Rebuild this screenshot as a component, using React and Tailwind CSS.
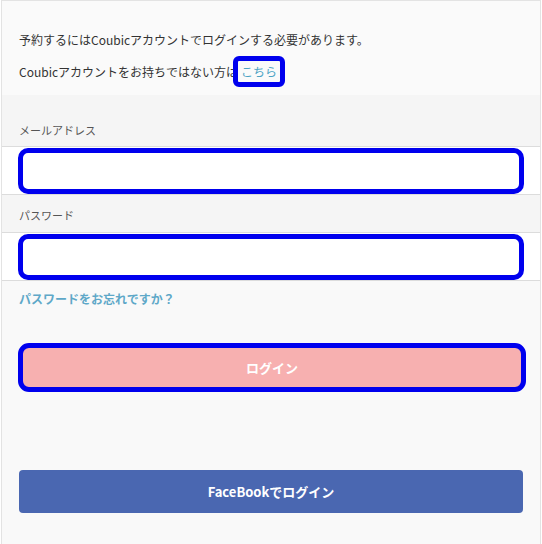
export default function App() {
  const font = { fontFamily: '"Noto Sans CJK JP", "Noto Sans", sans-serif' };
  return (
    <div
      className="h-[544px] w-[542px] bg-white text-[#333]"
      style={font}
    >
      <div className="mx-[1px] flex h-[544px] flex-col border-x border-t border-[#e3e3e3] bg-[#f9f9f9]">
        <div className="flex h-[94px] flex-col bg-[#fafafa] px-[17px] pt-[29px] text-[12px] leading-[20px] text-[#333]">
          <p>予約するにはCoubicアカウントでログインする必要があります。</p>
          <p className="mt-[6px] flex items-center">
            Coubicアカウントをお持ちではない方は
            <a className="-ml-[5px] flex h-[31px] items-center rounded-[6px] border-[5px] border-[#0000ee] px-[3px] text-[#4aa3c4]">
              こちら
            </a>
          </p>
        </div>

        <div className="flex h-[51px] items-end bg-[#f5f5f5] px-[17px] pb-[8px] text-[11px] text-[#555]">
          メールアドレス
        </div>
        <div className="flex h-[49px] items-center border-y border-[#dcdcdc] bg-white px-[16px]">
          <div className="h-[46px] w-[506px] rounded-[10px] border-[5px] border-[#0000ee] bg-white" />
        </div>

        <div className="flex h-[37px] items-center bg-[#f5f5f5] px-[17px] pt-[4px] text-[11px] text-[#555]">
          パスワード
        </div>
        <div className="flex h-[49px] items-center border-y border-[#dcdcdc] bg-white px-[16px]">
          <div className="h-[46px] w-[506px] rounded-[10px] border-[5px] border-[#0000ee] bg-white" />
        </div>

        <div className="px-[17px] pt-[4px]">
          <a className="text-[12px] font-bold text-[#5ea8c8]">パスワードをお忘れですか？</a>
        </div>

        <div className="mt-[34px] px-[16px]">
          <div className="w-[508px] rounded-[11px] border-[5px] border-[#0000ee] bg-[#f7b0b0]">
            <div className="flex h-[39px] items-center justify-center text-[13px] font-bold text-white">
              ログイン
            </div>
          </div>
        </div>

        <div className="mt-[78px] px-[17px]">
          <button className="flex h-[43px] w-[504px] items-center justify-center rounded-[4px] bg-[#4a67b1] text-[13px] font-bold text-white">
            FaceBookでログイン
          </button>
        </div>
      </div>
    </div>
  );
}
